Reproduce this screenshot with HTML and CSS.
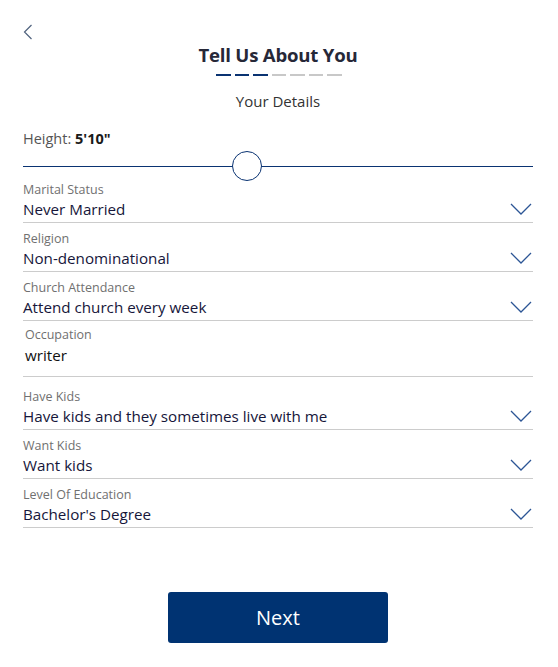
FILE: index.html
```html
<!DOCTYPE html>
<html>
<head>
<meta charset="utf-8">
<link rel="stylesheet" href="styles.css">
</head>
<body>
<div class="page">
  <div class="topbar">
    <svg class="back" width="10" height="16" viewBox="0 0 10 16"><path d="M8.5 1 L1.5 8 L8.5 15" fill="none" stroke="#50627e" stroke-width="1.2"/></svg>
  </div>
  <h1 class="title">Tell Us About You</h1>
  <div class="steps">
    <span class="step on"></span><span class="step on"></span><span class="step on"></span><span class="step"></span><span class="step"></span><span class="step"></span><span class="step"></span>
  </div>
  <div class="subtitle">Your Details</div>
  <div class="height">Height: <b>5'10"</b></div>
  <div class="slider"><span class="thumb"></span></div>

  <div class="field">
    <div class="label">Marital Status</div>
    <div class="value">Never Married</div>
    <svg class="chev" width="22" height="12" viewBox="0 0 22 12"><path d="M1 1 L11 11 L21 1" fill="none" stroke="#2c5595" stroke-width="1.3"/></svg>
  </div>
  <div class="field">
    <div class="label">Religion</div>
    <div class="value">Non-denominational</div>
    <svg class="chev" width="22" height="12" viewBox="0 0 22 12"><path d="M1 1 L11 11 L21 1" fill="none" stroke="#2c5595" stroke-width="1.3"/></svg>
  </div>
  <div class="field">
    <div class="label">Church Attendance</div>
    <div class="value">Attend church every week</div>
    <svg class="chev" width="22" height="12" viewBox="0 0 22 12"><path d="M1 1 L11 11 L21 1" fill="none" stroke="#2c5595" stroke-width="1.3"/></svg>
  </div>
  <div class="field text">
    <div class="label">Occupation</div>
    <div class="value">writer</div>
  </div>
  <div class="field spaced">
    <div class="label">Have Kids</div>
    <div class="value">Have kids and they sometimes live with me</div>
    <svg class="chev" width="22" height="12" viewBox="0 0 22 12"><path d="M1 1 L11 11 L21 1" fill="none" stroke="#2c5595" stroke-width="1.3"/></svg>
  </div>
  <div class="field">
    <div class="label">Want Kids</div>
    <div class="value">Want kids</div>
    <svg class="chev" width="22" height="12" viewBox="0 0 22 12"><path d="M1 1 L11 11 L21 1" fill="none" stroke="#2c5595" stroke-width="1.3"/></svg>
  </div>
  <div class="field">
    <div class="label">Level Of Education</div>
    <div class="value">Bachelor's Degree</div>
    <svg class="chev" width="22" height="12" viewBox="0 0 22 12"><path d="M1 1 L11 11 L21 1" fill="none" stroke="#2c5595" stroke-width="1.3"/></svg>
  </div>

  <div class="actions"><button class="next">Next</button></div>
</div>
</body>
</html>
```
FILE: styles.css
```css
* { box-sizing: border-box; }
html, body { margin: 0; padding: 0; background: #fff; }
body { font-family: "Open Sans", "Noto Sans", sans-serif; color: #1c1c30; }
.page { padding: 0 25px 0 23px; }
.topbar { height: 40px; padding-top: 24px; }
.back { display: block; }
.title { margin: 2px 0 0; text-align: center; font-size: 18.6px; font-weight: 700; line-height: 26px; color: #262838; letter-spacing: -0.2px; }
.steps { display: flex; justify-content: center; gap: 4px; margin-top: 6px; padding-left: 2px; }
.step { width: 14.5px; height: 2px; background: #c8c8c8; }
.step.on { background: #0a3372; }
.subtitle { text-align: center; font-size: 15px; line-height: 20px; margin-top: 15px; color: #333; }
.height { font-size: 14.5px; line-height: 20px; margin-top: 18px; color: #555; }
.height b { color: #1a1a1a; font-weight: 700; }
.slider { position: relative; height: 1px; background: #0a3372; margin-top: 17px; margin-bottom: 7px; }
.thumb { position: absolute; left: 209px; top: -15px; width: 30px; height: 30px; border-radius: 50%; border: 1.3px solid #0a3372; background: #fff; }
.field { position: relative; height: 49px; border-bottom: 1px solid #ccc; padding-top: 8px; }
.field.text { height: 56px; padding: 6px 0 0 2px; }
.field.spaced { height: 53px; padding-top: 12px; }
.label { font-size: 12.5px; line-height: 16px; color: #707070; }
.value { font-size: 15.2px; line-height: 22px; color: #16163a; }
.field.text .value { color: #111; margin-top: 1px; }
.chev { position: absolute; right: 1px; bottom: 7px; }
.actions { display: flex; justify-content: center; margin-top: 64px; }
.next { width: 220px; height: 51px; border: none; border-radius: 3px; background: #003372; color: #fff; font-family: inherit; font-size: 20px; }
```
